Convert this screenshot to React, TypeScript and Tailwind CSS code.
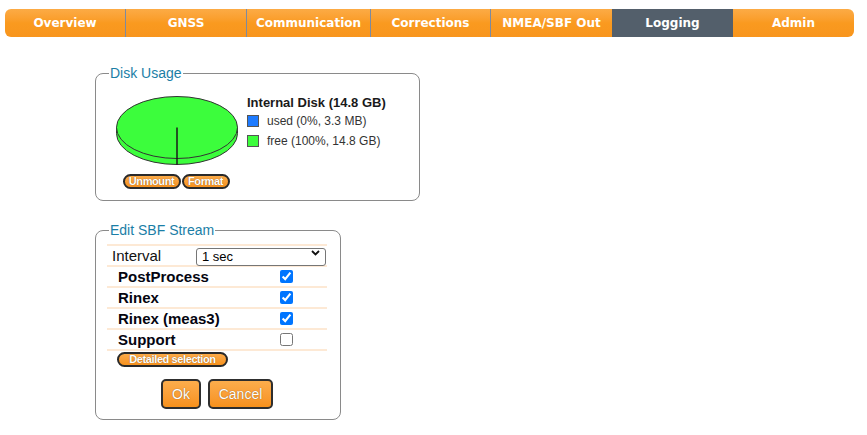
import { useState } from 'react';

const tabs = [
  { label: 'Overview', w: 'w-[120px]' },
  { label: 'GNSS', w: 'w-[121px]' },
  { label: 'Communication', w: 'w-[124px]' },
  { label: 'Corrections', w: 'w-[120px]' },
  { label: 'NMEA/SBF Out', w: 'w-[122px]' },
  { label: 'Logging', w: 'w-[121px]' },
  { label: 'Admin', w: 'w-[121px]' },
];

const streams = [
  { name: 'PostProcess', on: true },
  { name: 'Rinex', on: true },
  { name: 'Rinex (meas3)', on: true },
  { name: 'Support', on: false },
];

function NavBar() {
  return (
    <div className="ml-[5px] mt-[9px] flex h-[28px] w-[849px] overflow-hidden rounded-[6px]">
      {tabs.map((t, i) => {
        const active = t.label === 'Logging';
        const sep = i > 0 && i < 5;
        return (
          <div
            key={t.label}
            className={
              t.w +
              ' flex items-center justify-center font-["DejaVu_Sans",sans-serif] text-[12px] font-bold text-white ' +
              (active
                ? 'bg-[#535f6b]'
                : 'bg-linear-to-b from-[#fcab45] via-[#fa9a1f] to-[#f8951d]') +
              (sep ? ' border-l border-[#7c8aa0]' : '')
            }
          >
            {t.label}
          </div>
        );
      })}
    </div>
  );
}

function Pie() {
  return (
    <svg width="124" height="70" viewBox="0 0 124 70">
      <path
        d="M1.5 32.5 v6 A60.5 31 0 0 0 122.5 38.5 v-6 Z"
        fill="#3cfd3c"
        stroke="#333"
        strokeWidth="1"
      />
      <ellipse cx="62" cy="32.5" rx="60.5" ry="31" fill="#3cfd3c" stroke="#333" strokeWidth="1" />
      <line x1="62" y1="32.5" x2="62" y2="69.5" stroke="#1a1a1a" strokeWidth="1.5" />
    </svg>
  );
}

function PillButton({ children, className = '' }: { children: React.ReactNode; className?: string }) {
  return (
    <button
      className={
        'flex h-[15px] items-center justify-center rounded-full border-2 border-[#2a2a2a] bg-linear-to-b from-[#fbaa48] to-[#f7921c] text-[11px] font-bold leading-none tracking-[-0.4px] text-white [text-shadow:0_0_1px_#7a4a10] ' +
        className
      }
    >
      {children}
    </button>
  );
}

function BigButton({ children, className = '' }: { children: React.ReactNode; className?: string }) {
  return (
    <button
      className={
        'h-[30px] rounded-[5px] border-2 border-[#2e2e2e] bg-linear-to-b from-[#fcad4c] to-[#f7911b] text-[14px] text-white [text-shadow:0_0_1px_#7a4a10] ' +
        className
      }
    >
      {children}
    </button>
  );
}

export default function App() {
  const [interval, setInterval] = useState('1 sec');

  return (
    <div className="h-[435px] w-[867px] overflow-hidden bg-white font-['Liberation_Sans',Arial,sans-serif] text-[#111]">
      <NavBar />

      <fieldset className="ml-[95px] mt-[28px] w-[325px] rounded-[8px] border border-[#8a8a8a] pb-[11px] pl-[13px] pt-[14px]">
        <legend className="px-[1px] text-[14px] leading-[16px] text-[#1b7ea6]">Disk Usage</legend>
        <div className="flex">
          <div className="ml-[6px] flex w-[124px] flex-col items-center">
            <Pie />
            <div className="mt-[9px] flex gap-[1px] pr-[2px]">
              <PillButton className="w-[58px]">Unmount</PillButton>
              <PillButton className="w-[48px]">Format</PillButton>
            </div>
          </div>
          <div className="ml-[8px] flex flex-col">
            <div className="text-[13px] font-bold leading-[15px] text-[#1a1a1a]">Internal Disk (14.8 GB)</div>
            <div className="mt-[5px] flex h-[12px] items-center text-[12px] text-[#333]">
              <span className="mr-[8px] h-[12px] w-[12px] border border-[#555] bg-[#1e7bff]" />
              used (0%, 3.3 MB)
            </div>
            <div className="mt-[8px] flex h-[12px] items-center text-[12px] text-[#333]">
              <span className="mr-[8px] h-[12px] w-[12px] border border-[#555] bg-[#3cfd3c]" />
              free (100%, 14.8 GB)
            </div>
          </div>
        </div>
      </fieldset>

      <fieldset className="ml-[95px] mt-[21px] w-[246px] rounded-[8px] border border-[#8a8a8a] pb-[10px] pl-[11px] pt-[6px]">
        <legend className="ml-[2px] px-[1px] text-[14px] leading-[16px] text-[#1b7ea6]">Edit SBF Stream</legend>
        <div className="w-[220px]">
          <div className="flex h-[21px] items-center border-t-2 border-[#fde9d5]">
            <span className="w-[89px] pl-[5px] text-[15px] leading-[18px]">Interval</span>
            <div className="relative">
              <select
                value={interval}
                onChange={(e) => setInterval(e.target.value)}
                className="h-[18px] w-[130px] appearance-none rounded-[3px] border border-[#767676] bg-white pl-[5px] text-[13px] leading-[16px] text-black"
              >
                <option>1 sec</option>
                <option>5 sec</option>
                <option>15 sec</option>
                <option>30 sec</option>
                <option>60 sec</option>
              </select>
              <svg
                className="pointer-events-none absolute right-[6px] top-[6px]"
                width="9"
                height="6"
                viewBox="0 0 9 6"
              >
                <path d="M1 1 L4.5 4.5 L8 1" fill="none" stroke="#111" strokeWidth="1.8" />
              </svg>
            </div>
          </div>
          {streams.map((s, i) => (
            <div
              key={s.name}
              className={
                'flex h-[21px] items-center border-t-2 border-[#fde9d5]' +
                (i === streams.length - 1 ? ' h-[23px] border-b-2' : '')
              }
            >
              <span className="w-[173px] pl-[11px] text-[15px] font-bold leading-[18px] text-[#050510]">
                {s.name}
              </span>
              <input type="checkbox" defaultChecked={s.on} className="h-[13px] w-[13px]" />
            </div>
          ))}
          <PillButton className="ml-[10px] mt-[1px] w-[111px]">Detailed selection</PillButton>
          <div className="mt-[12px] flex justify-center gap-[7px]">
            <BigButton className="w-[40px]">Ok</BigButton>
            <BigButton className="w-[65px]">Cancel</BigButton>
          </div>
        </div>
      </fieldset>
    </div>
  );
}
